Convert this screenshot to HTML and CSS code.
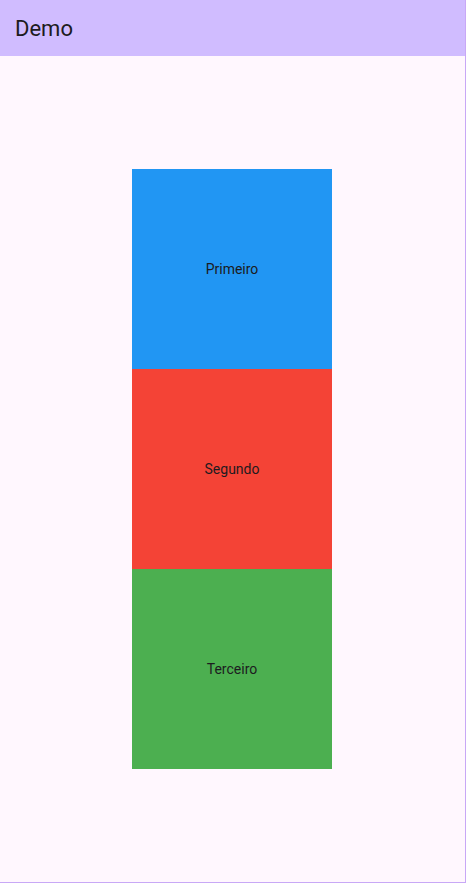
FILE: index.html
```html
<!DOCTYPE html>
<html lang="en">
<head>
    <meta charset="UTF-8">
    <meta name="viewport" content="width=device-width, initial-scale=1.0">
    <title>Demo</title>
    <link rel="stylesheet" href="styles.css">
</head>
<body>
    <div class="frame">
        <header class="app-bar">
            <h1 class="title">Demo</h1>
        </header>
        <main class="content">
            <div class="stack">
                <div class="box blue">Primeiro</div>
                <div class="box red">Segundo</div>
                <div class="box green">Terceiro</div>
            </div>
        </main>
    </div>
</body>
</html>
```

FILE: styles.css
```css
html, body {
    margin: 0;
    padding: 0;
    height: 100%;
}
body {
    font-family: Roboto, "Liberation Sans", sans-serif;
    background-color: #fff7fe;
}
.frame {
    display: flex;
    flex-direction: column;
    height: 100%;
    box-sizing: border-box;
    border-right: 1px solid #c8a8f6;
    border-bottom: 1px solid #c8a8f6;
}
.app-bar {
    height: 56px;
    flex-shrink: 0;
    background-color: #d0bcff;
    display: flex;
    align-items: center;
    padding: 0 16px 0 15px;
}
.title {
    margin: 0;
    font-size: 22px;
    font-weight: 400;
    color: #1d1b20;
}
.content {
    flex: 1;
    display: flex;
    align-items: center;
    justify-content: center;
    padding-right: 1px;
}
.stack {
    display: flex;
    flex-direction: column;
}
.box {
    width: 200px;
    height: 200px;
    display: flex;
    align-items: center;
    justify-content: center;
    font-size: 14px;
    color: #1d1b20;
}
.blue {
    background-color: #2196f3;
}
.red {
    background-color: #f44336;
}
.green {
    background-color: #4caf50;
}
```
